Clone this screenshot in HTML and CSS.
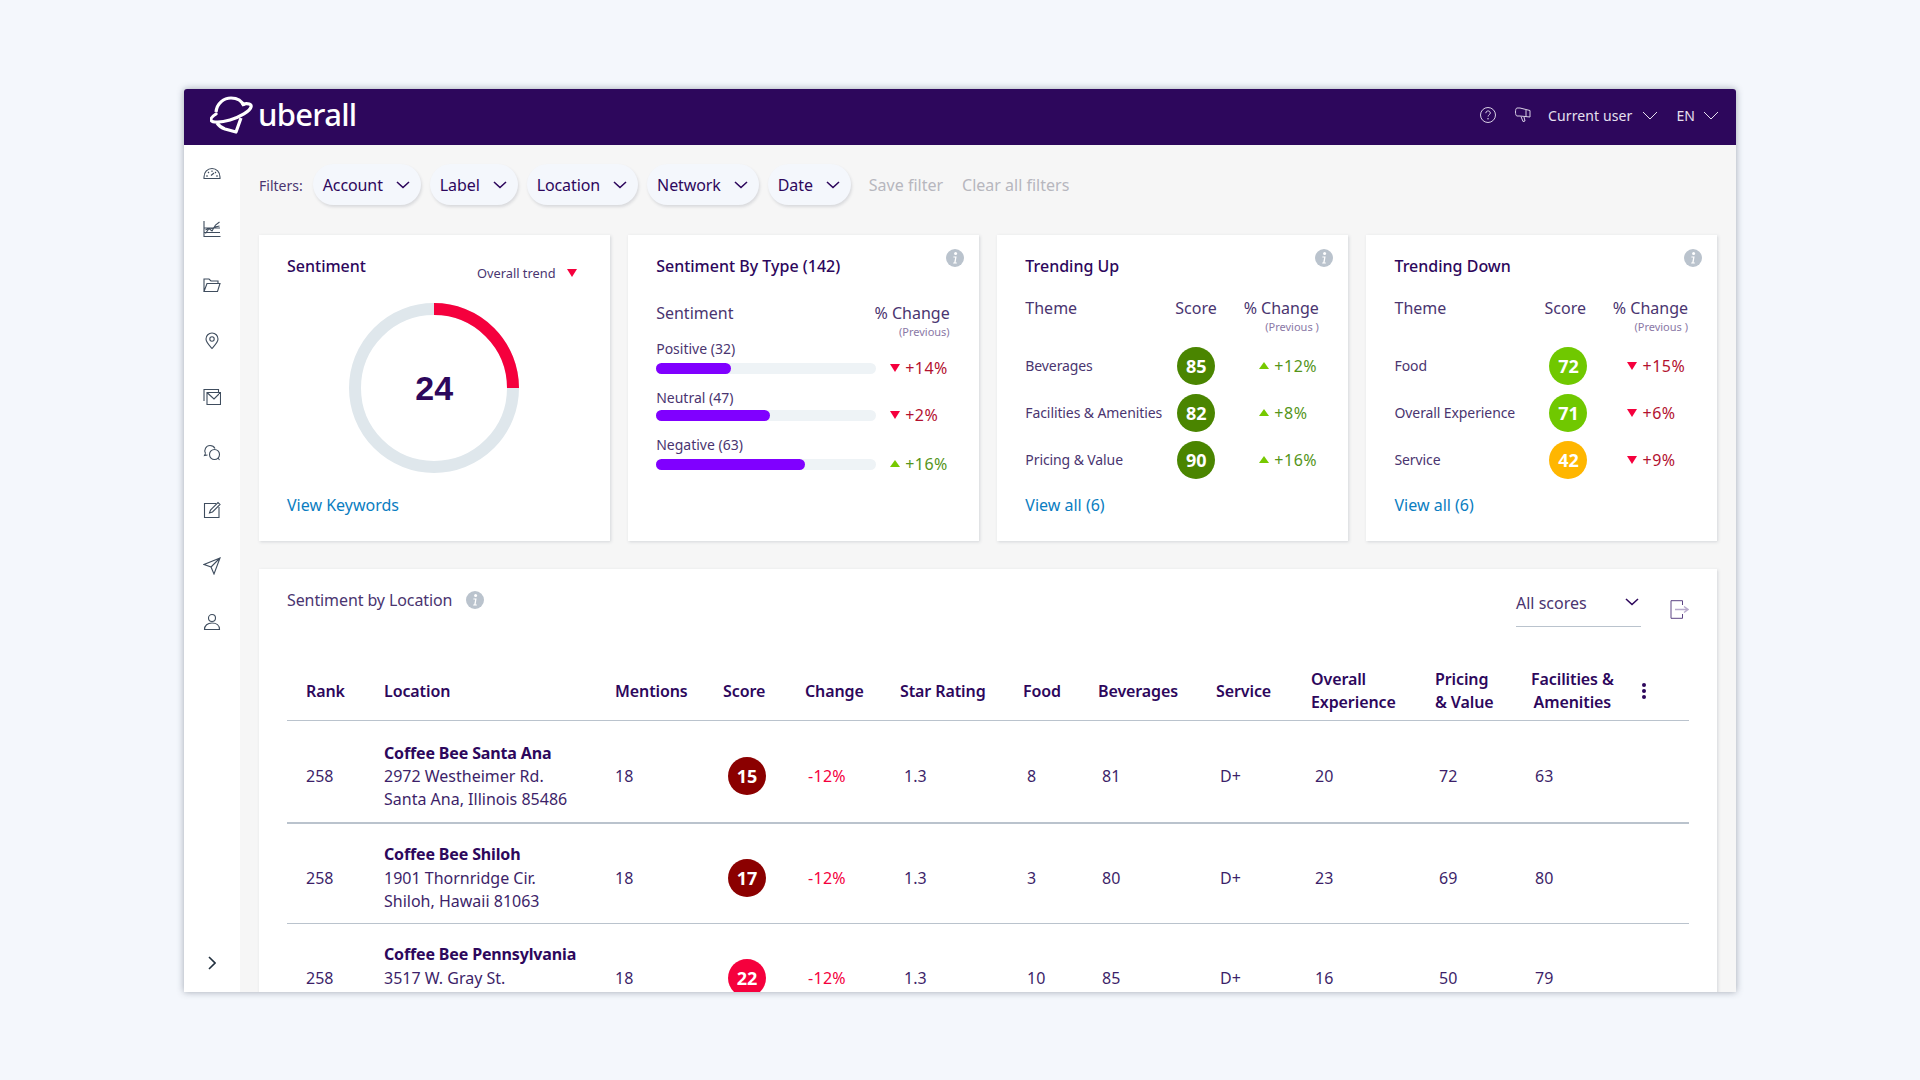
FILE: index.html
```html
<!DOCTYPE html>
<html lang="en">
<head>
<meta charset="utf-8">
<title>uberall</title>
<link rel="stylesheet" href="styles.css">
</head>
<body>
<svg class="defs" width="0" height="0">
  <defs>
    <symbol id="i-info" viewBox="0 0 18 18"><circle cx="9" cy="9" r="9" fill="#bac3cd"/><circle cx="9.600" cy="4.600" r="1.500" fill="#fff"/><path d="M7.400 7.600h3.200l-1 6h1.200v1H7.200v-1h1l1-5H7.400z" fill="#fff"/></symbol>
    <symbol id="i-chev" viewBox="0 0 14 8"><path d="M1 1l6 5.500L13 1" fill="none" stroke="currentColor" stroke-width="1.600"/></symbol>
    <symbol id="i-chev-thin" viewBox="0 0 16 9"><path d="M1 1l7 7 7-7" fill="none" stroke="currentColor" stroke-width="1"/></symbol>
    <symbol id="i-up" viewBox="0 0 10 8"><path d="M5 0l5 7H0z" fill="#76c900"/></symbol>
    <symbol id="i-down" viewBox="0 0 10 8"><path d="M0 0h10L5 8z" fill="#f5003d"/></symbol>
  </defs>
</svg>
<div class="app">
  <header class="topbar">
    <div class="logo">
      <svg class="logo-mark" viewBox="6 0 44 40" width="44" height="40"><path d="M12 17C13 8 20 3 27 3c6 0 11 3 13 8" fill="none" stroke="#fff" stroke-width="3.200"/><path d="M39 9c5-1 9 0 8 3-1 4-11 10-21 13-9 2.500-18 3-19 0-.5-1.500 2-4 5-6" fill="none" stroke="#fff" stroke-width="3.200" stroke-linecap="round"/><path d="M13 28c2 3 5 5 8 6l11 3 5-14" fill="none" stroke="#fff" stroke-width="3.200" stroke-linejoin="round"/></svg>
      <span class="logo-text">uberall</span>
    </div>
    <div class="top-actions">
      <svg class="top-icon" viewBox="0 0 18 18" width="18" height="18"><circle cx="9" cy="9" r="7.500" fill="none" stroke="#d8d0e4" stroke-width="1"/><path d="M6.800 7.200c0-3 4.500-3 4.500-.2 0 1.700-2.200 1.800-2.200 3.500" fill="none" stroke="#d8d0e4"/><circle cx="9" cy="12.800" r=".8" fill="#d8d0e4"/></svg>
      <svg class="top-icon megaphone" viewBox="0 0 18 16" width="18" height="16"><path d="M3 1h3l10 2.500V10L6 9H3C1 9 1 1 3 1zM7 9.500l2 5 2-.5-1-4M12 3v7" fill="none" stroke="#d8d0e4" stroke-width="1"/></svg>
      <span class="top-menu user">Current user<svg class="top-chev" width="16" height="9"><use href="#i-chev-thin"/></svg></span>
      <span class="top-menu lang">EN<svg class="top-chev" width="16" height="9"><use href="#i-chev-thin"/></svg></span>
    </div>
  </header>
  <div class="body">
    <nav class="sidebar">
      <div class="nav-icons">
        <svg class="nav-icon" viewBox="0 0 18 18"><path d="M1 13c0-5 3.500-8.500 8-8.500s8 3.500 8 8.500v1.500H1zM5 8l1 1M9 6.500v1.500M13 8l-1 1M8 11.500l3-2.500M3 12h2M13 12h2" /></svg>
        <svg class="nav-icon" viewBox="0 0 18 18"><path d="M1 1v15.500h16.500M1 12.500h16M1 8h16M2.500 13.500L6 8.500l3 2.500 3.500-6 4-3M2.500 10l3.500-2 3 .5 3-1.500 4.500-1" /></svg>
        <svg class="nav-icon" viewBox="0 0 18 18"><path d="M1 15.500V3h5l2 2h7v2.500M1 15.500h13.500L17 7.500H4z" /></svg>
        <svg class="nav-icon" viewBox="0 0 18 18"><path d="M9 16.500C5.500 12.500 3 10 3 7a6 6 0 0 1 12 0c0 3-2.500 5.500-6 9.500z" /><circle cx="9" cy="7" r="2.200" /></svg>
        <svg class="nav-icon" viewBox="0 0 18 18"><path d="M1 13V1.500h14.500V4M4 4.500h13.500V16.500H4zM4.500 5l6.500 6 6-6" /></svg>
        <svg class="nav-icon" viewBox="0 0 18 18"><path d="M2.500 9.500C.5 6 3 1.500 7 1.500c2.500 0 4 1 5 3M2.500 9.500l-1 2 3-.5" /><circle cx="11.500" cy="10.500" r="5" /><path d="M15 14l1.500 2" /></svg>
        <svg class="nav-icon" viewBox="0 0 18 18"><path d="M13 2.500H1.500V16.500H16V6M6.500 12l1-3L15 1.500l2 2L9.500 11z" /></svg>
        <svg class="nav-icon" viewBox="0 0 18 18"><path d="M17 1L1 7.500l7 2.500 3 7z M17 1L8 10" /></svg>
        <svg class="nav-icon" viewBox="0 0 18 18"><circle cx="9" cy="5" r="3.500" /><path d="M1.500 16.500c0-4 3-6.500 7.500-6.500s7.500 2.500 7.500 6.500z" /></svg>
      </div>
      <svg class="nav-expand" viewBox="0 0 8 14" width="8" height="14"><path d="M1 1l6 6-6 6" fill="none" stroke="#22303f" stroke-width="1.600"/></svg>
    </nav>
    <main class="main">
      <div class="filters">
        <span class="filters-label">Filters:</span>
        <span class="pill">Account<svg class="pill-chev" width="14" height="8"><use href="#i-chev"/></svg></span>
        <span class="pill">Label<svg class="pill-chev" width="14" height="8"><use href="#i-chev"/></svg></span>
        <span class="pill">Location<svg class="pill-chev" width="14" height="8"><use href="#i-chev"/></svg></span>
        <span class="pill">Network<svg class="pill-chev" width="14" height="8"><use href="#i-chev"/></svg></span>
        <span class="pill">Date<svg class="pill-chev" width="14" height="8"><use href="#i-chev"/></svg></span>
        <span class="filter-link save">Save filter</span>
        <span class="filter-link">Clear all filters</span>
      </div>

      <section class="cards">
        <article class="card">
          <div class="sent-head">
            <h2 class="card-title">Sentiment</h2>
            <span class="trend">Overall trend<svg class="tri-trend" width="10" height="8"><use href="#i-down"/></svg></span>
          </div>
          <div class="donut">
            <svg viewBox="0 0 170 170" width="170" height="170">
              <circle cx="85" cy="85" r="79" fill="none" stroke="#dfe7ec" stroke-width="12"/>
              <path d="M85 6a79 79 0 0 1 79 79" fill="none" stroke="#f5003d" stroke-width="12"/>
            </svg>
            <span class="donut-num">24</span>
          </div>
          <a class="link">View Keywords</a>
        </article>

        <article class="card">
          <svg class="card-info" width="18" height="18"><use href="#i-info"/></svg>
          <h2 class="card-title">Sentiment By Type (142)</h2>
          <div class="type-head">
            <span>Sentiment</span>
            <div class="change-head"><span>% Change</span><small>(Previous)</small></div>
          </div>
          <div class="bars">
            <div class="bar-row">
              <div class="bar-col"><span class="bar-label">Positive (32)</span><div class="bar-track"><div class="bar-fill" style="width:75px"></div></div></div>
              <div class="delta neg"><svg width="10" height="8"><use href="#i-down"/></svg>+14%</div>
            </div>
            <div class="bar-row">
              <div class="bar-col"><span class="bar-label">Neutral (47)</span><div class="bar-track"><div class="bar-fill" style="width:114px"></div></div></div>
              <div class="delta neg"><svg width="10" height="8"><use href="#i-down"/></svg>+2%</div>
            </div>
            <div class="bar-row">
              <div class="bar-col"><span class="bar-label">Negative (63)</span><div class="bar-track"><div class="bar-fill" style="width:149px"></div></div></div>
              <div class="delta pos"><svg width="10" height="8"><use href="#i-up"/></svg>+16%</div>
            </div>
          </div>
        </article>

        <article class="card">
          <svg class="card-info" width="18" height="18"><use href="#i-info"/></svg>
          <h2 class="card-title">Trending Up</h2>
          <div class="theme-head">
            <span>Theme</span><span>Score</span>
            <div class="change-head"><span>% Change</span><small>(Previous )</small></div>
          </div>
          <div class="theme-row"><span>Beverages</span><b class="badge green">85</b><div class="delta pos"><svg width="10" height="8"><use href="#i-up"/></svg>+12%</div></div>
          <div class="theme-row"><span>Facilities &amp; Amenities</span><b class="badge green">82</b><div class="delta pos"><svg width="10" height="8"><use href="#i-up"/></svg>+8%</div></div>
          <div class="theme-row"><span>Pricing &amp; Value</span><b class="badge green">90</b><div class="delta pos"><svg width="10" height="8"><use href="#i-up"/></svg>+16%</div></div>
          <a class="link view-all">View all (6)</a>
        </article>

        <article class="card card-down">
          <svg class="card-info" width="18" height="18"><use href="#i-info"/></svg>
          <h2 class="card-title">Trending Down</h2>
          <div class="theme-head">
            <span>Theme</span><span>Score</span>
            <div class="change-head"><span>% Change</span><small>(Previous )</small></div>
          </div>
          <div class="theme-row"><span>Food</span><b class="badge lime">72</b><div class="delta neg"><svg width="10" height="8"><use href="#i-down"/></svg>+15%</div></div>
          <div class="theme-row"><span>Overall Experience</span><b class="badge lime">71</b><div class="delta neg"><svg width="10" height="8"><use href="#i-down"/></svg>+6%</div></div>
          <div class="theme-row"><span>Service</span><b class="badge amber">42</b><div class="delta neg"><svg width="10" height="8"><use href="#i-down"/></svg>+9%</div></div>
          <a class="link view-all">View all (6)</a>
        </article>
      </section>

      <section class="panel">
        <div class="panel-head">
          <div class="panel-title"><span>Sentiment by Location</span><svg width="18" height="18"><use href="#i-info"/></svg></div>
          <div class="panel-tools">
            <div class="select"><span>All scores</span><svg width="14" height="8"><use href="#i-chev"/></svg></div>
            <svg class="export" viewBox="0 0 19 19" width="19" height="19"><path d="M12.500 5V.7H1v17.600h11.500V14" fill="none" stroke="#5d4484" stroke-width="1"/><path d="M5 9.500h12M14 6.500l4 3-4 3" fill="none" stroke="#b9abcd" stroke-width="1.500"/></svg>
          </div>
        </div>
        <table class="table">
          <colgroup>
            <col class="c1"><col class="c2"><col class="c3"><col class="c4"><col class="c5"><col class="c6"><col class="c7"><col class="c8"><col class="c9"><col class="c10"><col class="c11"><col class="c12">
          </colgroup>
          <thead>
            <tr>
              <th>Rank</th><th>Location</th><th>Mentions</th><th>Score</th><th>Change</th><th>Star Rating</th><th>Food</th><th>Beverages</th><th>Service</th><th>Overall<br>Experience</th><th>Pricing<br>&amp; Value</th>
              <th><div class="last-head"><span class="center-head">Facilities &amp;<br>Amenities</span><span class="dots"><i></i><i></i><i></i></span></div></th>
            </tr>
          </thead>
          <tbody>
            <tr class="first">
              <td>258</td><td class="loc"><b>Coffee Bee Santa Ana</b><br>2972 Westheimer Rd.<br>Santa Ana, Illinois 85486</td><td>18</td><td><b class="badge dark">15</b></td><td class="minus">-12%</td><td class="v">1.3</td><td class="v">8</td><td class="v">81</td><td class="v">D+</td><td class="v">20</td><td class="v">72</td><td class="v">63</td>
            </tr>
            <tr>
              <td>258</td><td class="loc"><b>Coffee Bee Shiloh</b><br>1901 Thornridge Cir.<br>Shiloh, Hawaii 81063</td><td>18</td><td><b class="badge dark">17</b></td><td class="minus">-12%</td><td class="v">1.3</td><td class="v">3</td><td class="v">80</td><td class="v">D+</td><td class="v">23</td><td class="v">69</td><td class="v">80</td>
            </tr>
            <tr>
              <td>258</td><td class="loc"><b>Coffee Bee Pennsylvania</b><br>3517 W. Gray St.</td><td>18</td><td><b class="badge red">22</b></td><td class="minus">-12%</td><td class="v">1.3</td><td class="v">10</td><td class="v">85</td><td class="v">D+</td><td class="v">16</td><td class="v">50</td><td class="v">79</td>
            </tr>
          </tbody>
        </table>
      </section>
    </main>
  </div>
</div>
</body>
</html>
```
FILE: styles.css
```css
* { box-sizing: border-box; }
html, body { margin: 0; height: 100%; }
body {
  background: #f4f7fc;
  font-family: "Noto Sans", "Liberation Sans", sans-serif;
  color: #2d075c;
  padding: 89px 184px 0;
  overflow: hidden;
}
.defs { position: absolute; }
.app {
  height: 903px;
  display: flex;
  flex-direction: column;
  overflow: hidden;
  border-radius: 3px 3px 0 0;
  box-shadow: 0 0 7px rgba(60, 70, 90, .45);
  background: #f6f6f6;
}
.topbar {
  flex: 0 0 56px;
  background: #2d075c;
  display: flex;
  align-items: center;
  justify-content: space-between;
  padding: 0 17px 4px 26px;
}
.logo { display: flex; align-items: center; gap: 4px; }
.logo-mark { display: block; }
.logo-text { color: #fff; font: 500 31px/1 "Noto Sans", sans-serif; letter-spacing: -.7px; margin-top: -2px; }
.top-actions { display: flex; align-items: center; color: #e6e0ef; font-size: 14px; letter-spacing: .1px; }
.top-icon { display: block; margin-right: 17px; }
.megaphone { margin-right: 16px; }
.top-menu { display: flex; align-items: center; gap: 10px; }
.top-menu.lang { gap: 8px; }
.top-menu.user { margin-right: 18px; }
.top-chev { color: #e6e0ef; }
.body { flex: 1; display: flex; min-height: 0; }
.sidebar {
  flex: 0 0 56px;
  background: #fff;
  display: flex;
  flex-direction: column;
  align-items: center;
  padding: 19px 0 22px;
  justify-content: space-between;
}
.nav-icons { display: flex; flex-direction: column; gap: 38.100px; }
.nav-icon { display: block; width: 18px; height: 18px; fill: none; stroke: #3f4d5e; stroke-width: 1.100; }
.nav-expand { display: block; }
.main { flex: 1; min-width: 0; padding: 19px 19px 0; overflow: hidden; }
.filters { display: flex; align-items: center; height: 41px; font-size: 16px; }
.filters-label { font-size: 14px; color: #4a3570; margin-right: 10px; padding-top: 1px; }
.pill {
  height: 41px;
  display: flex;
  align-items: center;
  gap: 13px;
  padding: 0 11px 0 10px;
  margin-right: 9px;
  border-radius: 21px;
  background: #f4f7fc;
  box-shadow: 1px 2px 3px rgba(60, 70, 90, .16);
  letter-spacing: -.1px;
}
.pill-chev { color: #2d075c; }
.filter-link { color: #b7b7be; margin-right: 19px; }
.filter-link.save { margin-left: 9px; }
.cards {
  display: grid;
  grid-template-columns: repeat(4, 1fr);
  gap: 18.670px;
  margin-top: 30px;
}
.card {
  position: relative;
  height: 306px;
  background: #fff;
  padding: 18px 28px 0;
  box-shadow: 1px 1px 3px rgba(60, 70, 90, .18);
  display: flex;
  flex-direction: column;
}
.card-title { margin: 0; font-size: 16px; line-height: 26px; font-weight: 500; }
.card-info { position: absolute; top: 14px; right: 15px; }
.sent-head { display: flex; justify-content: space-between; align-items: flex-start; padding-right: 5px; }
.trend { display: flex; align-items: center; gap: 11px; font-size: 12.800px; line-height: 20px; margin-top: 10px; color: #4a3570; }
.donut { position: relative; align-self: center; width: 170px; height: 170px; margin-top: 20px; }
.donut svg { display: block; }
.donut-num {
  position: absolute;
  inset: 0;
  display: flex;
  align-items: center;
  justify-content: center;
  font: 700 34px/1 "Liberation Sans", sans-serif;
}
.link { color: #0a7dc1; font-size: 16px; line-height: 24px; }
.donut + .link { margin-top: 20px; }
.view-all { position: absolute; left: 28px; top: 258px; }
.type-head {
  display: flex;
  justify-content: space-between;
  font-size: 16px;
  line-height: 22px;
  margin-top: 23px;
  color: #4a3570;
}
.change-head { display: flex; flex-direction: column; align-items: flex-end; margin-right: 1px; }
.change-head small { font-size: 11px; line-height: 16px; color: #8a78a6; }
.bars { display: flex; flex-direction: column; margin-top: -4px; }
.bar-row { display: flex; align-items: flex-end; height: 47px; }
.bar-row:first-child { height: 38px; }
.bar-row:last-child { height: 49px; }
.bar-col { width: 220px; flex: none; }
.bar-label { display: block; font-size: 14px; line-height: 20px; color: #4a3570; margin-bottom: 4px; }
.bar-row:nth-child(2) .bar-label { margin-bottom: 2px; }
.bar-track { height: 11px; border-radius: 6px; background: #eef3f6; overflow: hidden; }
.bar-fill { height: 100%; background: #8000ff; border-radius: 0 6px 6px 0; }
.delta { display: flex; align-items: center; gap: 5px; font-size: 16px; line-height: 20px; letter-spacing: .5px; }
.bar-row .delta { margin-left: 14px; margin-bottom: -4px; }
.delta.neg { color: #b3112f; }
.delta.pos { color: #55951a; }
.theme-head {
  display: grid;
  grid-template-columns: 150px 1fr auto;
  font-size: 16px;
  line-height: 22px;
  margin-top: 18px;
  margin-bottom: 5px;
  color: #4a3570;
  height: 40px;
}
.theme-row {
  display: grid;
  grid-template-columns: 152px 57px 1fr;
  align-items: center;
  height: 47px;
  font-size: 14px;
  color: #4a3570;
  white-space: nowrap;
  letter-spacing: -.1px;
}
.theme-row .delta { padding-left: 25px; }
.card-down .theme-row { grid-template-columns: 155px 57px 1fr; }
.card-down .theme-row .delta { padding-left: 21px; }
.badge {
  display: inline-flex;
  width: 38px;
  height: 38px;
  border-radius: 50%;
  align-items: center;
  justify-content: center;
  color: #fff;
  font-size: 18px;
  font-weight: 700;
  letter-spacing: 0;
}
.green { background: #4a8500; }
.lime { background: #70c800; }
.amber { background: #ffb600; }
.dark { background: #8b0000; }
.red { background: #f5003d; }
.panel {
  height: 520px;
  margin-top: 28px;
  padding: 0 28px;
  background: #fff;
  box-shadow: 1px 1px 3px rgba(60, 70, 90, .18);
}
.panel-head { display: flex; justify-content: space-between; height: 90px; }
.panel-title { display: flex; align-items: center; gap: 14px; height: 62px; font-size: 16px; color: #4a3570; letter-spacing: -.1px; }
.panel-tools { display: flex; align-items: flex-start; padding-top: 19px; }
.select {
  width: 125px;
  height: 39px;
  display: flex;
  justify-content: space-between;
  align-items: flex-start;
  border-bottom: 1px solid #bac3cd;
  font-size: 16px;
  line-height: 31px;
  color: #4a3570;
  padding-right: 2px;
}
.select svg { margin-top: 10px; color: #2d075c; }
.export { margin: 12px 0 0 29px; }
.table { table-layout: fixed; width: 1402px; border-collapse: collapse; font-size: 16px; }
.c1 { width: 97px; } .c2 { width: 231px; } .c3 { width: 108px; } .c4 { width: 82px; }
.c5 { width: 95px; } .c6 { width: 123px; } .c7 { width: 75px; } .c8 { width: 118px; }
.c9 { width: 95px; } .c10 { width: 124px; } .c11 { width: 96px; } .c12 { width: 158px; }
th {
  text-align: left;
  font-weight: 600;
  line-height: 23px;
  height: 61px;
  padding: 4px 0 0;
  white-space: nowrap;
  border-bottom: 1px solid #bac3cd;
  letter-spacing: -.1px;
}
th:first-child, td:first-child { padding-left: 19px; }
td {
  height: 100px;
  padding: 19px 0 10px;
  line-height: 23.300px;
  white-space: nowrap;
  border-bottom: 1px solid #bac3cd;
  color: #3d1f69;
}
tr.first td { height: 102px; padding-top: 21px; padding-bottom: 11px; border-bottom-width: 2px; }
.loc { vertical-align: top; }
.loc b { color: #2d075c; font-weight: 700; letter-spacing: -.15px; }
.v { padding-left: 4px; }
td.minus { color: #f5003d; padding-left: 3px; letter-spacing: .3px; }
td .badge { margin-left: 5px; vertical-align: middle; }
.last-head { display: flex; align-items: center; gap: 28px; }
.center-head { text-align: center; }
.dots { display: flex; flex-direction: column; gap: 2px; }
.dots i { width: 4px; height: 4px; border-radius: 50%; background: #2d075c; }
```
